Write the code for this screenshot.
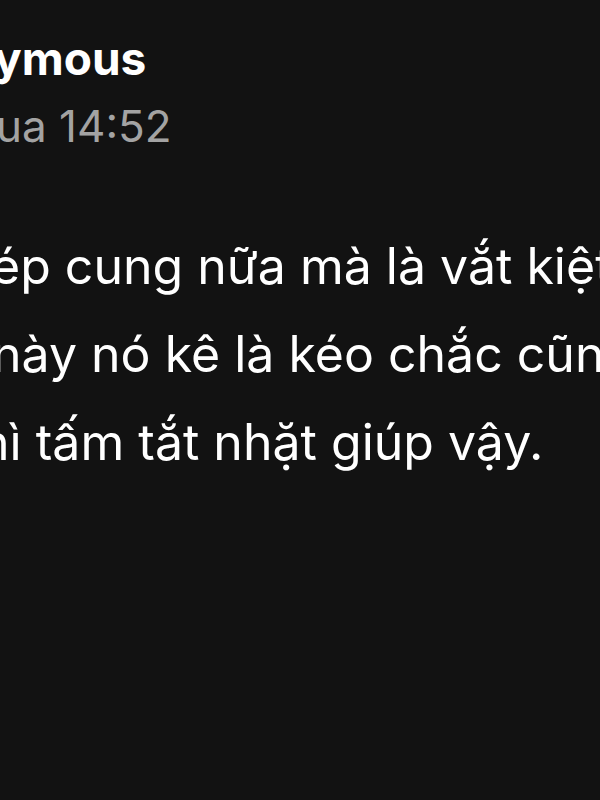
export default function App() {
  return (
    <div className="h-[800px] w-[600px] overflow-hidden bg-[#121212] text-white" style={{ fontFamily: 'Inter, "Liberation Sans", sans-serif' }}>
      <div className="pt-[26px]">
        <div className="whitespace-nowrap text-[46px] font-bold leading-[64px] -ml-[6px]">ymous</div>
        <div className="whitespace-nowrap text-[44px] leading-[64px] text-[#a3a3a3] -ml-[4px] mt-[4px]">ua 14:52</div>
      </div>
      <div className="mt-[64px] text-[50px] leading-[88px]">
        <div className="whitespace-nowrap -ml-[9px]">ép cung nữa mà là vắt kiệt sức</div>
        <div className="whitespace-nowrap -ml-[8px]">này nó kê là kéo chắc cũng được</div>
        <div className="whitespace-nowrap -ml-[20px]">hì tấm tắt nhặt giúp vậy.</div>
      </div>
    </div>
  );
}
